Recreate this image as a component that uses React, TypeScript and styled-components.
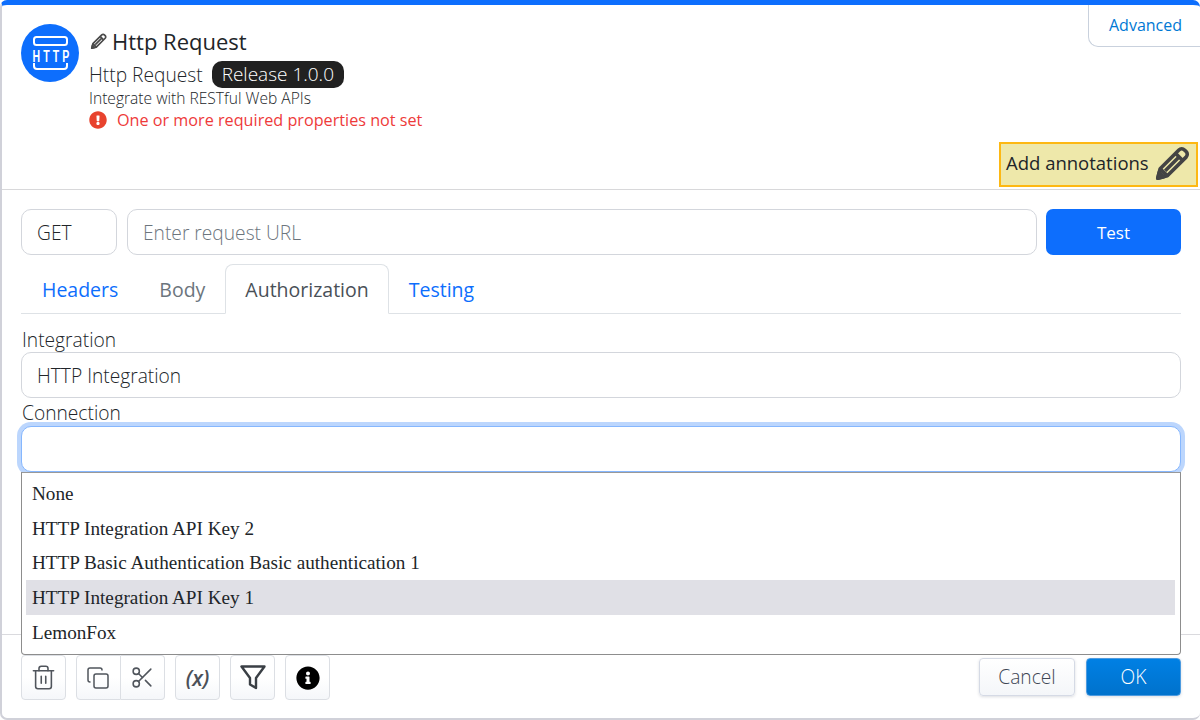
import React from 'react'

import { Copy, Scissors, Trash2 } from 'lucide-react'
import { FaExclamationCircle, FaInfoCircle } from 'react-icons/fa'
import styled, { createGlobalStyle } from 'styled-components'

const GlobalStyle = createGlobalStyle`
  html, body {
    margin: 0;
    height: 720px;
    overflow: hidden;
    background: #fff;
  }

  body {
    font-family: 'Open Sans', 'Liberation Sans', sans-serif;
    color: #212529;
  }

  * {
    box-sizing: border-box;
  }
`

const Frame = styled.div`
  position: relative;
  display: flex;
  flex-direction: column;
  height: 720px;
  border-top: 5px solid #0d6efd;
  border-left: 2px solid #d0d1d9;
  border-bottom: 2px solid #d0d1d9;
  border-radius: 7px;
`

const Header = styled.header`
  position: relative;
  flex: none;
  height: 185px;
  padding: 19px 0 0 19px;
  border-bottom: 1px solid #d8d8da;
  display: flex;
  gap: 10px;
`

const AppIcon = styled.svg`
  flex: none;
  width: 58px;
  height: 58px;
`

const HeaderText = styled.div`
  display: flex;
  flex-direction: column;
  padding-top: 2px;
`

const Title = styled.h1`
  display: flex;
  align-items: center;
  gap: 5px;
  margin: 0 0 0 1px;
  height: 30px;
  font-size: 22px;
  font-weight: 400;
  color: #212529;

  svg {
    width: 17px;
    height: 17px;
    color: #4a4a4a;
  }
`

const NameRow = styled.div`
  display: flex;
  align-items: center;
  gap: 9px;
  height: 30px;
  margin-top: 3px;
  font-size: 19.2px;
  font-weight: 300;
`

const Badge = styled.span`
  display: inline-flex;
  align-items: center;
  height: 27px;
  padding: 0 10px;
  border-radius: 10px;
  background: #212121;
  color: #fff;
  font-size: 19px;
  font-weight: 300;
`

const Description = styled.div`
  font-size: 15.6px;
  line-height: 19px;
  font-weight: 300;
  color: #212529;
`

const ErrorRow = styled.div`
  display: flex;
  align-items: center;
  gap: 10px;
  height: 24px;
  font-size: 16.2px;
  color: #ee3a3a;

  svg {
    width: 18px;
    height: 18px;
    color: #e8432e;
  }
`

const AdvancedTab = styled.a`
  position: absolute;
  top: 0;
  right: 0;
  display: flex;
  align-items: center;
  width: 112px;
  height: 42px;
  padding: 0 0 2px 20px;
  border-left: 1px solid #c9d1dd;
  border-bottom: 1px solid #c9d1dd;
  border-bottom-left-radius: 10px;
  font-size: 16px;
  color: #0078d4;
`

const AnnotationButton = styled.button`
  position: absolute;
  right: 2px;
  top: 137px;
  display: flex;
  align-items: center;
  justify-content: space-between;
  width: 199px;
  height: 45px;
  padding: 0 6px 4px 5px;
  border: 2px solid #fdb813;
  background: #eee8aa;
  font-family: inherit;
  font-size: 18.5px;
  color: #212529;

  svg {
    width: 36px;
    height: 36px;
    margin-bottom: -3px;
    color: #444;
  }
`

const Content = styled.main`
  flex: 1;
  padding: 19px 19px 0;
`

const UrlRow = styled.div`
  display: flex;
  gap: 10px;
  height: 46px;
`

const Field = styled.div<{ $width?: number; $muted?: boolean; $focused?: boolean }>`
  display: flex;
  align-items: center;
  flex: ${(props) => (props.$width ? `0 0 ${props.$width}px` : '1')};
  height: 46px;
  padding: 0 15px;
  border: 1px solid ${(props) => (props.$focused ? '#86b7fe' : '#d3d6dc')};
  border-radius: 10px;
  background: #fff;
  font-size: 19.2px;
  font-weight: 300;
  color: ${(props) => (props.$muted ? '#6c757d' : '#212529')};
  box-shadow: ${(props) => (props.$focused ? '0 0 0 4px #bcd6fd' : 'none')};
`

const TestButton = styled.button`
  flex: 0 0 135px;
  margin-left: -1px;
  padding-top: 2px;
  border: 0;
  border-radius: 7px;
  background: #0d6efd;
  color: #fff;
  font-family: inherit;
  font-size: 17px;
`

const Tabs = styled.nav`
  display: flex;
  height: 50px;
  margin-top: 9px;
  border-bottom: 1px solid #dee2e6;
`

const Tab = styled.a<{ $active?: boolean; $disabled?: boolean }>`
  display: flex;
  align-items: center;
  height: 50px;
  padding: 1px 19px 0;
  border: 1px solid ${(props) => (props.$active ? '#dee2e6' : 'transparent')};
  border-bottom-color: ${(props) => (props.$active ? '#fff' : 'transparent')};
  border-radius: 8px 8px 0 0;
  font-size: 19.5px;
  background: ${(props) => (props.$active ? '#fff' : 'transparent')};
  color: ${(props) => {
    if (props.$active) return '#495057'
    return props.$disabled ? '#6c757d' : '#0d6efd'
  }};

  &:first-child {
    padding-left: 20px;
    padding-right: 20px;
  }
`

const FieldLabel = styled.label`
  display: block;
  height: 25px;
  padding-left: 1px;
  font-size: 19.2px;
  font-weight: 300;
  line-height: 25px;
  color: #212529;
`

const FirstLabel = styled(FieldLabel)`
  margin-top: 13px;
`

const SecondLabel = styled(FieldLabel)`
  margin-top: 2px;
  height: 26px;
`

const OptionList = styled.ul`
  position: absolute;
  z-index: 2;
  left: 19px;
  right: 19px;
  top: 467px;
  height: 183px;
  margin: 0;
  padding: 3px 5px 4px 4px;
  list-style: none;
  border: 1px solid #8d8d8d;
  border-top-color: #999;
  border-radius: 0 0 4px 4px;
  background: #fff;
  font-family: 'Liberation Serif', 'Times New Roman', serif;
  font-size: 19.2px;
  color: #212529;
`

const Option = styled.li<{ $selected?: boolean }>`
  display: flex;
  align-items: center;
  height: 34.8px;
  padding: 1px 0 0 6px;
  background: ${(props) => (props.$selected ? '#e0e0e6' : 'transparent')};
`

const Footer = styled.footer`
  flex: none;
  display: flex;
  align-items: flex-start;
  justify-content: space-between;
  height: 84px;
  padding: 20px 19px 0;
  border-top: 1px solid #dadade;
`

const ToolGroup = styled.div`
  display: flex;
  gap: 10px;
`

const ToolSet = styled.div`
  display: flex;
`

const ToolButton = styled.button<{ $joined?: 'left' | 'right' }>`
  display: flex;
  align-items: center;
  justify-content: center;
  width: ${(props) => (props.$joined ? '44.5px' : '45px')};
  height: 45px;
  padding: 0;
  border: 1px solid #dcdfe4;
  border-left-width: ${(props) => (props.$joined === 'right' ? 0 : '1px')};
  border-radius: ${(props) => {
    if (props.$joined === 'left') return '4px 0 0 4px'
    return props.$joined === 'right' ? '0 4px 4px 0' : '4px'
  }};
  background: linear-gradient(#ffffff 50%, #f5f7fa);
  color: #50555c;
  font-family: inherit;
`

const VariableLabel = styled.span`
  font-size: 21px;
  font-style: italic;
  font-weight: 600;
  color: #4b5058;
`

const FilterIcon = styled.svg`
  width: 26px;
  height: 26px;
  margin-top: -2px;
`

const ActionGroup = styled.div`
  display: flex;
  gap: 11px;
  padding-top: 3px;
`

const CancelButton = styled.button`
  width: 96px;
  height: 38px;
  padding-bottom: 2px;
  border: 1px solid #d5dae5;
  border-radius: 4px;
  background: linear-gradient(#ffffff, #f4f6f9);
  box-shadow: 0 1px 3px rgba(80, 90, 110, 0.2);
  font-family: inherit;
  font-size: 19.2px;
  font-weight: 300;
  color: #3d4654;
`

const OkButton = styled.button`
  width: 95px;
  height: 38px;
  padding-bottom: 2px;
  border: 1px solid #4d9be0;
  border-radius: 4px;
  background: linear-gradient(#0080e4, #0072cc);
  box-shadow: 0 1px 3px rgba(80, 90, 110, 0.2);
  font-family: inherit;
  font-size: 19.2px;
  font-weight: 300;
  color: #fff;
`

function HttpLogo() {
  return (
    <AppIcon viewBox="0 0 58 58">
      <circle cx="29" cy="29" r="29" fill="#0d6efd" />
      <rect x="13" y="13" width="33" height="8" rx="2.5" fill="none" stroke="#fff" strokeWidth="2" />
      <text
        transform="translate(11.5 38) scale(0.62 1)"
        letterSpacing="5"
        fill="#fff"
        fontFamily="'Liberation Sans', sans-serif"
        fontSize="17"
        fontWeight="700"
      >
        HTTP
      </text>
      <path d="M13 39v3a3 3 0 0 0 3 3h27a3 3 0 0 0 3-3v-3" fill="none" stroke="#fff" strokeWidth="2" />
    </AppIcon>
  )
}

function PencilIcon() {
  return (
    <svg viewBox="0 0 24 24" fill="none" stroke="currentColor" strokeWidth="2.4" strokeLinejoin="round">
      <path d="M2.5 21.5l1.6-6.4L16.6 2.6a2.6 2.6 0 0 1 3.7 0l1.1 1.1a2.6 2.6 0 0 1 0 3.7L8.9 19.9z" />
      <path d="M14.3 4.9l4.8 4.8M4.1 15.1l4.8 4.8M7.5 16.5L17 7" />
      <path d="M2.5 21.5l1-4 3 3z" fill="currentColor" />
    </svg>
  )
}

const OPTIONS = [
  'None',
  'HTTP Integration API Key 2',
  'HTTP Basic Authentication Basic authentication 1',
  'HTTP Integration API Key 1',
  'LemonFox',
]

export default function App() {
  return (
    <Frame>
      <GlobalStyle />
      <Header>
        <HttpLogo />
        <HeaderText>
          <Title>
            <PencilIcon />
            Http Request
          </Title>
          <NameRow>
            Http Request
            <Badge>Release 1.0.0</Badge>
          </NameRow>
          <Description>Integrate with RESTful Web APIs</Description>
          <ErrorRow>
            <FaExclamationCircle />
            One or more required properties not set
          </ErrorRow>
        </HeaderText>
        <AdvancedTab>Advanced</AdvancedTab>
        <AnnotationButton>
          Add annotations
          <PencilIcon />
        </AnnotationButton>
      </Header>

      <Content>
        <UrlRow>
          <Field $width={96}>GET</Field>
          <Field $muted>Enter request URL</Field>
          <TestButton>Test</TestButton>
        </UrlRow>
        <Tabs>
          <Tab>Headers</Tab>
          <Tab $disabled>Body</Tab>
          <Tab $active>Authorization</Tab>
          <Tab>Testing</Tab>
        </Tabs>
        <FirstLabel>Integration</FirstLabel>
        <Field>HTTP Integration</Field>
        <SecondLabel>Connection</SecondLabel>
        <Field $focused />
      </Content>

      <OptionList>
        {OPTIONS.map((option, index) => (
          <Option key={option} $selected={index === 3}>
            {option}
          </Option>
        ))}
      </OptionList>

      <Footer>
        <ToolGroup>
          <ToolButton>
            <Trash2 size={27} strokeWidth={1.4} />
          </ToolButton>
          <ToolSet>
            <ToolButton $joined="left">
              <Copy size={24} strokeWidth={1.5} />
            </ToolButton>
            <ToolButton $joined="right">
              <Scissors size={25} strokeWidth={1.5} />
            </ToolButton>
          </ToolSet>
          <ToolButton>
            <VariableLabel>(x)</VariableLabel>
          </ToolButton>
          <ToolButton>
            <FilterIcon viewBox="0 0 26 26" fill="none" stroke="#3a3f45" strokeWidth="2.4" strokeLinejoin="round">
              <path d="M1.5 2.5h23L16 14v10l-6-3.5V14z" />
            </FilterIcon>
          </ToolButton>
          <ToolButton>
            <FaInfoCircle size={24} color="#000" />
          </ToolButton>
        </ToolGroup>
        <ActionGroup>
          <CancelButton>Cancel</CancelButton>
          <OkButton>OK</OkButton>
        </ActionGroup>
      </Footer>
    </Frame>
  )
}
